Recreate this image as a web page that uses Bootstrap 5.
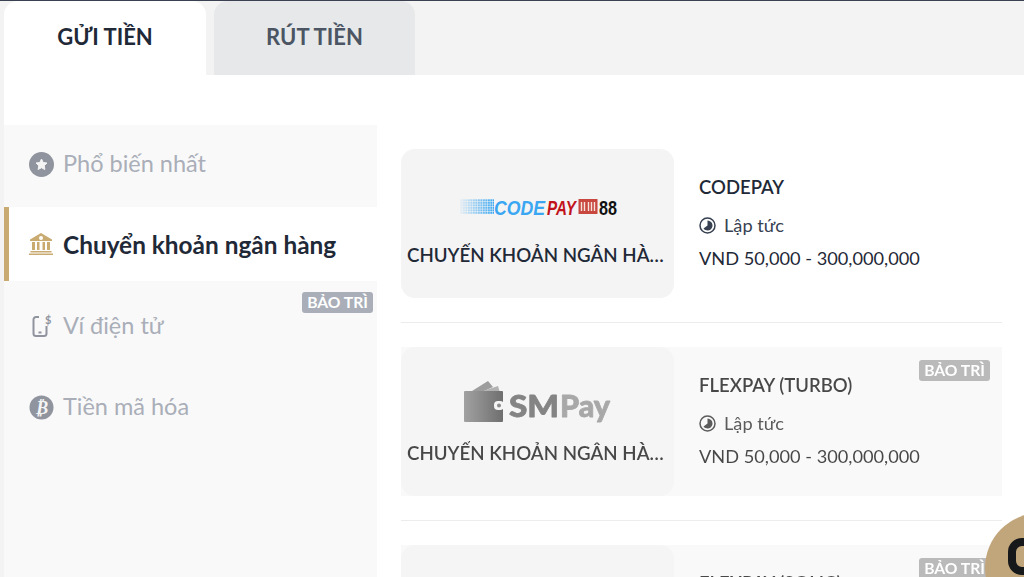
<!DOCTYPE html>
<html lang="vi">
<head>
<meta charset="utf-8">
<title>Gửi tiền</title>
<link href="https://cdn.jsdelivr.net/npm/bootstrap@5.3.0/dist/css/bootstrap.min.css" rel="stylesheet">
<style>
html,body{height:577px;overflow:hidden}
body{background:#f3f3f4;font-family:Lato,"Noto Sans",sans-serif;color:#1f2937;border-top:1px solid #3c4152;padding-left:4px}
.tabbar{height:74px;gap:8px}
.tabitem{width:201px;padding-bottom:4px;font-size:22px;font-weight:700;border-radius:14px 14px 0 0;background:#e7e8ea;color:#4b5563}
.tabitem.on{background:#fff;color:#1f2937;width:202px}
.sheet{background:#fff;height:502px;padding-top:50px;overflow:hidden}
.sidecol{width:373px;background:#f9f9f9;flex:none}
.sideitem{height:72px;padding-left:25px;font-size:23.5px;color:#a9aeb8;gap:9px;position:relative}
.sideitem svg{flex:none}
.sideitem.first{height:82px;padding-bottom:4px}
.sideitem.on{height:74px;background:#fff;color:#1f2937;font-weight:700;font-size:24.4px;gap:10px;border-left:5px solid #c9ab72;padding-left:20px}
.sideitem.on span{padding-top:2px}
.sideitem.mid{height:90px}
.tagmark{position:absolute;background:#a9aeb8;color:#fff;font-size:15.7px;font-weight:700;line-height:21px;padding:0 5px;border-radius:3px}
.sideitem .tagmark{top:11px;right:4px}
.paylist{width:601px;margin-left:24px;padding-top:24px;flex:none}
.payrow{height:149px;background:#f9f9f9;position:relative}
.payrow.plain{background:#fff}
.payrow.off{filter:grayscale(1);opacity:.85}
.payrow .tagmark{top:13px;right:12px;background:#aeaeae}
.logobox{width:273px;background:#f4f4f4;border-radius:14px;flex:none;padding:0 6px}
.logoslot{height:58px;margin-bottom:5px}
.payname{font-size:18.7px;font-weight:600;line-height:24px;white-space:nowrap;overflow:hidden;text-overflow:ellipsis;width:100%;text-align:center}
.payinfo{padding-left:25px;padding-top:26px;font-size:18.2px;line-height:24px}
.paytitle{font-size:18.5px;font-weight:600;margin-bottom:14px}
.payspeed{gap:8px;margin-bottom:9px;color:#374151}
.rule{height:1px;background:#ececec;margin:24px 0}
.logotxt{font-family:"Liberation Sans",sans-serif;font-weight:700}
.smtxt{font-family:Lato,sans-serif;font-weight:900;stroke-width:.8;stroke-linejoin:round}
.bubble{position:fixed;left:985px;top:513px;width:110px;height:110px;border-radius:50%;background:#c2a67b}
.bubble i{position:absolute;left:23px;top:25px;width:36px;height:37px;border:8px solid #17181a;border-radius:14px}
</style>
</head>
<body>
<div class="d-flex tabbar">
  <div class="tabitem on d-flex align-items-center justify-content-center">GỬI TIỀN</div>
  <div class="tabitem d-flex align-items-center justify-content-center">RÚT TIỀN</div>
</div>
<div class="sheet d-flex">
  <div class="sidecol">
    <div class="sideitem first d-flex align-items-center">
      <svg width="25" height="25" viewBox="0 0 25 25"><circle cx="12.5" cy="12.5" r="12.5" fill="#90949e"/><path d="M12.5 7l1.7 3.500 3.800.5-2.800 2.700.7 3.800-3.400-1.800-3.400 1.800.7-3.800L7 11l3.800-.5z" fill="#f4f4f5" stroke="#f4f4f5" stroke-linejoin="round"/></svg>
      <span>Phổ biến nhất</span>
    </div>
    <div class="sideitem on d-flex align-items-center">
      <svg width="24" height="22" viewBox="0 0 24 22" fill="#c9ab72"><path d="M12 0L23 6.500V8H1V6.500zM3 9h3v8H3zM8 9h2.500v8H8zM13.500 9H16v8h-2.500zM18 9h3v8h-3zM1.500 18h21v1.500h-21zM0 20.500h24V22H0z"/><circle cx="12" cy="5" r="2" fill="#fff"/></svg>
      <span>Chuyển khoản ngân hàng</span>
    </div>
    <div class="sideitem mid d-flex align-items-center">
      <span class="tagmark">BẢO TRÌ</span>
      <svg width="25" height="24" viewBox="0 0 25 24" fill="none" stroke="#90949e" stroke-width="2"><path d="M10 3H7A2.500 2.500 0 0 0 4.500 5.500v14A2.500 2.500 0 0 0 7 22h8a2.500 2.500 0 0 0 2.500-2.500V12"/><path d="M9.500 18.500h3"/><text x="16" y="10" font-size="11" font-weight="700" fill="#90949e" stroke="none" font-family="Lato">$</text></svg>
      <span>Ví điện tử</span>
    </div>
    <div class="sideitem d-flex align-items-center">
      <svg width="25" height="25" viewBox="0 0 25 25"><circle cx="12.500" cy="12.500" r="12" fill="#90949e"/><text x="12.500" y="19" text-anchor="middle" font-size="18" font-weight="700" font-style="italic" fill="#f4f4f5" font-family="Lato">₿</text></svg>
      <span>Tiền mã hóa</span>
    </div>
  </div>
  <div class="paylist">
    <div class="payrow plain d-flex">
      <div class="logobox d-flex flex-column align-items-center justify-content-center">
        <div class="logoslot d-flex align-items-center">
          <svg width="160" height="24" viewBox="0 0 160 24">
            <defs>
              <pattern id="dots" width="2.500" height="2.500" patternUnits="userSpaceOnUse"><rect width="2" height="2" fill="#3ba7f2"/></pattern>
              <linearGradient id="fade"><stop offset="0" stop-color="#fff" stop-opacity=".08"/><stop offset="1" stop-color="#fff"/></linearGradient>
              <mask id="fm"><rect x="2" y="2" width="34" height="15" fill="url(#fade)"/></mask>
            </defs>
            <rect x="2" y="2" width="34" height="15" fill="url(#dots)" mask="url(#fm)"/>
            <text class="logotxt" x="36" y="17.500" font-size="21" font-style="italic" fill="#3ba7f2" textLength="51" lengthAdjust="spacingAndGlyphs">CODE</text>
            <text class="logotxt" x="89" y="17.500" font-size="21" font-style="italic" fill="#c2121b" textLength="29" lengthAdjust="spacingAndGlyphs">PAY</text>
            <rect x="120.500" y="2" width="19" height="15" fill="#c8473f"/>
            <path d="M123.500 5v9M126.500 5v9M130.500 5v9M133.500 5v9M136.500 5v9" stroke="#f4e4dc" stroke-width="1.400"/>
            <text class="logotxt" x="141" y="17.500" font-size="20" fill="#111" textLength="18" lengthAdjust="spacingAndGlyphs">88</text>
          </svg>
        </div>
        <div class="payname">CHUYỂN KHOẢN NGÂN HÀNG</div>
      </div>
      <div class="payinfo">
        <div class="paytitle">CODEPAY</div>
        <div class="payspeed d-flex align-items-center">
          <svg width="17" height="17" viewBox="0 0 17 17"><circle cx="8.500" cy="8.500" r="7.500" fill="none" stroke="#374151" stroke-width="1.500"/><path d="M8.500 3.500a5 5 0 1 1-4 8l4-3z" fill="#374151"/></svg>
          <span>Lập tức</span>
        </div>
        <div>VND 50,000 - 300,000,000</div>
      </div>
    </div>
    <div class="rule"></div>
    <div class="payrow off d-flex">
      <span class="tagmark">BẢO TRÌ</span>
      <div class="logobox d-flex flex-column align-items-center justify-content-center">
        <div class="logoslot d-flex align-items-center">
          <svg width="148" height="52" viewBox="0 0 148 52">
            <defs><linearGradient id="wal"><stop offset="0" stop-color="#929292"/><stop offset="1" stop-color="#565656"/></linearGradient></defs>
            <path d="M8 10L24 0l5 6-9 4z" fill="#8c8c8c"/><path d="M19 10l15-5 1.500 5z" fill="#a5a5a5"/>
            <rect y="10" width="39" height="31" rx="1" fill="url(#wal)"/>
            <rect x="30" y="20" width="10" height="9" rx="4" fill="#f4f4f4"/><circle cx="35" cy="24.500" r="2" fill="#777"/>
            <text class="smtxt" x="45" y="36" font-size="31" fill="#6f6f6f" stroke="#6f6f6f" textLength="50" lengthAdjust="spacingAndGlyphs">SM</text>
            <text class="smtxt" x="96" y="36" font-size="31" fill="#9a9a9a" stroke="#9a9a9a" textLength="50" lengthAdjust="spacingAndGlyphs">Pay</text>
          </svg>
        </div>
        <div class="payname">CHUYỂN KHOẢN NGÂN HÀNG</div>
      </div>
      <div class="payinfo">
        <div class="paytitle">FLEXPAY (TURBO)</div>
        <div class="payspeed d-flex align-items-center">
          <svg width="17" height="17" viewBox="0 0 17 17"><circle cx="8.500" cy="8.500" r="7.500" fill="none" stroke="#374151" stroke-width="1.500"/><path d="M8.500 3.500a5 5 0 1 1-4 8l4-3z" fill="#374151"/></svg>
          <span>Lập tức</span>
        </div>
        <div>VND 50,000 - 300,000,000</div>
      </div>
    </div>
    <div class="rule"></div>
    <div class="payrow off d-flex">
      <span class="tagmark">BẢO TRÌ</span>
      <div class="logobox"></div>
      <div class="payinfo"><div class="paytitle">FLEXPAY (SOLIC)</div></div>
    </div>
  </div>
</div>
<div class="bubble"><i></i></div>
</body>
</html>
